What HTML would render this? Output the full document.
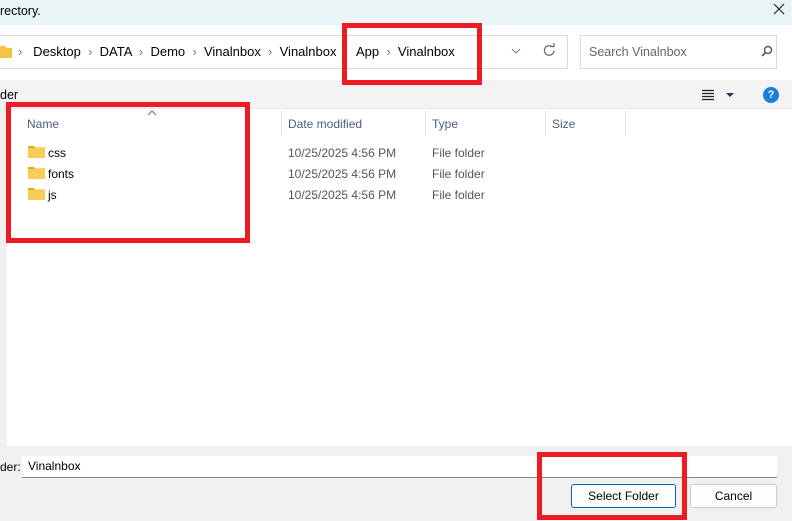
<!DOCTYPE html>
<html><head><meta charset="utf-8"><style>
*{margin:0;padding:0;box-sizing:border-box}
body{width:792px;height:521px;position:relative;overflow:hidden;background:#f0f0f0;font-family:"Liberation Sans",sans-serif;font-size:12px;color:#000}
.a{position:absolute;white-space:nowrap}
.red{position:absolute;border:5px solid #ed1c24}
.hd{color:#4c607a}
.g{color:#555}
.sep{position:absolute;top:110px;width:1px;height:26px;background:#e5e5e5}
.fold{position:absolute;width:17px;height:13px}
</style></head><body>
<div class="a" style="left:0;top:0;width:792px;height:25px;background:#e9f4f7"></div>
<div class="a" style="left:0;top:4px;font-size:12.5px">rectory.</div>
<svg class="a" style="left:773px;top:3px" width="12" height="12"><path d="M1 1L11 11M11 1L1 11" stroke="#222" stroke-width="1.2"/></svg>
<div class="a" style="left:0;top:25px;width:792px;height:55px;background:#fff"></div>
<div class="a" style="left:0;top:35px;width:568px;height:34px;border:1px solid #d9d9d9;border-left:none"></div>
<svg class="a" style="left:0;top:44px" width="12" height="14"><path d="M0 2h5l2 2h5v10H0z" fill="#f5c342"/></svg>
<div class="a" style="left:18px;top:44px;font-size:13px"><span style="color:#777">›</span>&nbsp;&nbsp; Desktop &nbsp;<span style="color:#777">›</span>&nbsp; DATA &nbsp;<span style="color:#777">›</span>&nbsp; Demo &nbsp;<span style="color:#777">›</span>&nbsp; Vinalnbox &nbsp;<span style="color:#777">›</span>&nbsp; Vinalnbox</div>
<div class="a" style="left:356px;top:44px;font-size:13px">App &nbsp;<span style="color:#777">›</span>&nbsp; Vinalnbox</div>
<svg class="a" style="left:511px;top:48px" width="10" height="6"><path d="M1 1L5 5L9 1" fill="none" stroke="#777" stroke-width="1"/></svg>
<svg class="a" style="left:542px;top:43px" width="15" height="15"><path d="M12 7.5A4.8 4.8 0 1 1 10.5 4" fill="none" stroke="#666" stroke-width="1.2"/><path d="M8 3.5h4V0" fill="none" stroke="#666" stroke-width="1.2"/></svg>
<div class="a" style="left:580px;top:35px;width:197px;height:34px;border:1px solid #d9d9d9"></div>
<div class="a" style="left:589px;top:45px;color:#666;font-size:12.5px">Search Vinalnbox</div>
<svg class="a" style="left:761px;top:45px" width="12" height="12"><circle cx="7" cy="5" r="3.5" fill="none" stroke="#555" stroke-width="1.4"/><path d="M4.5 7.5L1 11" stroke="#555" stroke-width="1.6"/></svg>
<div class="a" style="left:0;top:80px;width:792px;height:28px;background:#f3f3f3"></div>
<div class="a" style="left:0;top:88px;font-size:12.5px">der</div>
<svg class="a" style="left:701px;top:89px" width="36" height="12"><path d="M1 1.5h12M1 4.5h12M1 7.5h12M1 10.5h12" stroke="#222" stroke-width="1.2"/><path d="M25 4h8l-4 4z" fill="#1f3a5c"/></svg>
<div class="a" style="left:763px;top:87px;width:16px;height:16px;border-radius:50%;background:#1a7ee0;color:#fff;font-weight:bold;font-size:11px;text-align:center;line-height:16px">?</div>
<div class="a" style="left:7px;top:108px;width:785px;height:338px;background:#fff"></div>
<div class="a" style="left:0;top:108px;width:792px;height:1px;background:#e8e8e8"></div>
<svg class="a" style="left:147px;top:110px" width="10" height="6"><path d="M1 5L5 1L9 5" fill="none" stroke="#777" stroke-width="1"/></svg>
<div class="a hd" style="left:27px;top:117px">Name</div>
<div class="a hd" style="left:288px;top:117px">Date modified</div>
<div class="a hd" style="left:432px;top:117px">Type</div>
<div class="a hd" style="left:552px;top:117px">Size</div>
<div class="sep" style="left:281px"></div><div class="sep" style="left:425px"></div><div class="sep" style="left:545px"></div><div class="sep" style="left:625px"></div>
<svg class="fold" style="left:28px;top:145px"><path d="M0 1h6l1 1.5h10V13H0z" fill="#e9a81c"/><rect y="3" width="17" height="10" fill="#f8cd57"/></svg>
<svg class="fold" style="left:28px;top:166px"><path d="M0 1h6l1 1.5h10V13H0z" fill="#e9a81c"/><rect y="3" width="17" height="10" fill="#f8cd57"/></svg>
<svg class="fold" style="left:28px;top:187px"><path d="M0 1h6l1 1.5h10V13H0z" fill="#e9a81c"/><rect y="3" width="17" height="10" fill="#f8cd57"/></svg>
<div class="a" style="left:48px;top:146px">css</div>
<div class="a" style="left:48px;top:167px">fonts</div>
<div class="a" style="left:48px;top:188px">js</div>
<div class="a g" style="left:288px;top:146px">10/25/2025 4:56 PM</div>
<div class="a g" style="left:288px;top:167px">10/25/2025 4:56 PM</div>
<div class="a g" style="left:288px;top:188px">10/25/2025 4:56 PM</div>
<div class="a g" style="left:432px;top:146px">File folder</div>
<div class="a g" style="left:432px;top:167px">File folder</div>
<div class="a g" style="left:432px;top:188px">File folder</div>
<div class="a" style="left:0;top:460px">der:</div>
<div class="a" style="left:22px;top:456px;width:755px;height:22px;background:#fff;border-bottom:1px solid #888"></div>
<div class="a" style="left:28px;top:459px">Vinalnbox</div>
<div class="a" style="left:571px;top:484px;width:105px;height:24px;background:#fdfdfd;border:1px solid #0067c0;border-radius:3px;text-align:center;line-height:22px">Select Folder</div>
<div class="a" style="left:690px;top:484px;width:87px;height:24px;background:#fdfdfd;border:1px solid #ccc;border-radius:3px;text-align:center;line-height:22px">Cancel</div>
<div class="red" style="left:342px;top:23px;width:140px;height:62px"></div>
<div class="red" style="left:6px;top:102px;width:244px;height:141px"></div>
<div class="red" style="left:537px;top:452px;width:150px;height:68px"></div>
</body></html>
